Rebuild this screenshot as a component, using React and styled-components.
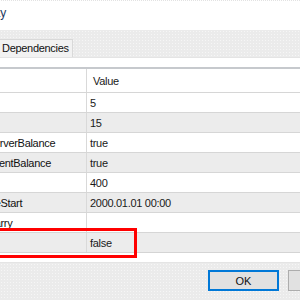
import React from 'react';
import styled, { createGlobalStyle } from 'styled-components';

const rows = [
  { name: 'Id', value: '5' },
  { name: 'Tf', value: '15' },
  { name: 'ServerBalance', value: 'true' },
  { name: 'ClientBalance', value: 'true' },
  { name: 'Pt', value: '400' },
  { name: 'ReStart', value: '2000.01.01 00:00' },
  { name: 'Carry', value: '' },
  { name: 'Ex', value: 'false', marked: true },
];

const GlobalStyle = createGlobalStyle`
  html, body {
    margin: 0;
    width: 300px;
    height: 300px;
    overflow: hidden;
    background: #fff;
  }
  body {
    font-family: "Liberation Sans", Arial, sans-serif;
    font-size: 11px;
    letter-spacing: -0.3px;
    color: #1a1a1a;
  }
`;

const dialogBg = `
  background-color: #ebebeb;
  background-image: radial-gradient(#f6f6f6 0.6px, transparent 0.8px);
  background-size: 3px 3px;
`;

const Window = styled.div`
  width: 440px;
  margin-left: -60px;
  display: flex;
  flex-direction: column;
`;

const TitleBar = styled.div`
  height: 30px;
  border-top: 1px dotted #e2e2e2;
  background: #fff;
  box-sizing: border-box;
  padding: 5px 0 0 21px;
`;

const Title = styled.span`
  font-size: 12px;
  line-height: 14px;
  letter-spacing: 0;
  color: #1e3a5f;
`;

const TabStrip = styled.div`
  ${dialogBg}
  height: 27px;
  display: flex;
  align-items: flex-end;
  padding-left: 58px;
  box-sizing: border-box;
`;

const Tab = styled.div`
  height: 18px;
  width: 75px;
  box-sizing: border-box;
  border: 1px solid #d9d9d9;
  border-bottom: none;
  background: #f2f2f2;
  padding-left: 3px;
  line-height: 17px;
  color: #111;
`;

const Page = styled.div`
  background: #fff;
  border-top: 1px solid #e4e4e4;
  border-bottom: 1px solid #e4e4e4;
  padding: 9px 0 9px;
`;

const Grid = styled.div`
  border-top: 2px solid #c6c9cd;
  border-bottom: 1px solid #d4d4d4;
  display: flex;
  flex-direction: column;
`;

const Row = styled.div`
  position: relative;
  display: grid;
  grid-template-columns: 147px 1fr;
  height: ${(p) => (p.$header ? 23 : 20)}px;
  box-sizing: border-box;
  border-top: ${(p) => (p.$header ? 'none' : '1px solid #d6d6d6')};
  background: ${(p) => (p.$shaded ? '#ececec' : '#fff')};
`;

const NameCell = styled.div`
  border-right: 1px solid #d9d9d9;
  padding-left: 47px;
  display: flex;
  align-items: center;
  white-space: nowrap;
  overflow: hidden;
  color: #111;
`;

const ValueCell = styled.div`
  padding-left: ${(p) => (p.$header ? 6 : 3)}px;
  display: flex;
  align-items: center;
  white-space: nowrap;
  color: #1a1a1a;
`;

const Marker = styled.div`
  position: absolute;
  top: -5px;
  bottom: -6px;
  left: 50px;
  width: 147px;
  border: 3px solid #ff0000;
  box-sizing: border-box;
  pointer-events: none;
`;

const Footer = styled.div`
  ${dialogBg}
  height: 40px;
  display: flex;
  gap: 9px;
  padding: 7px 0 0 268px;
  box-sizing: border-box;
`;

const Button = styled.button`
  flex: 0 0 71px;
  height: 21px;
  box-sizing: border-box;
  padding: 0;
  background: #e1e1e1;
  border: ${(p) => (p.$default ? '2px solid #0078d7' : '1px solid #adadad')};
  font-family: inherit;
  font-size: 11px;
  letter-spacing: 0;
  color: #111;
`;

export default function App() {
  return (
    <>
      <GlobalStyle />
      <Window>
        <TitleBar>
          <Title>Property</Title>
        </TitleBar>
        <TabStrip>
          <Tab>Dependencies</Tab>
        </TabStrip>
        <Page>
          <Grid>
            <Row $header>
              <NameCell />
              <ValueCell $header>Value</ValueCell>
            </Row>
            {rows.map((row, i) => (
              <Row key={row.name} $shaded={i % 2 === 1}>
                <NameCell>{row.name}</NameCell>
                <ValueCell>{row.value}</ValueCell>
                {row.marked && <Marker />}
              </Row>
            ))}
          </Grid>
        </Page>
        <Footer>
          <Button $default>OK</Button>
          <Button>Cancel</Button>
        </Footer>
      </Window>
    </>
  );
}
